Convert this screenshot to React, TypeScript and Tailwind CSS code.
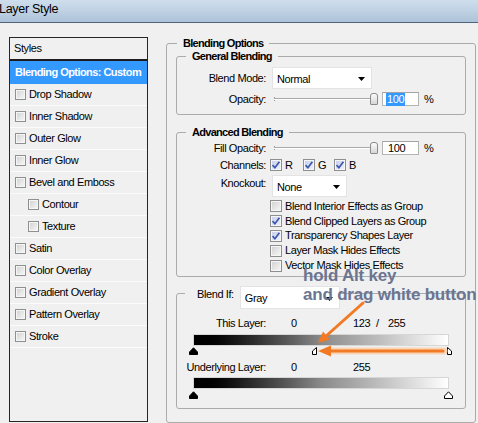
import React from "react";

type Mark = { v: number; kind: "black" | "white" | "halfL" | "halfR" };

function Check({ checked = false, size = 12 }: { checked?: boolean; size?: 11 | 12 }) {
  const dim = size === 11 ? "h-[11px] w-[11px]" : "h-[12px] w-[12px]";
  const fill = checked
    ? "bg-linear-to-br from-[#c3cbea] to-[#f3f5fc]"
    : "bg-linear-to-br from-[#d0d0d0] to-[#f9f9f9]";
  return (
    <span
      className={`relative inline-flex shrink-0 items-center justify-center border border-[#8e8f8f] shadow-[inset_0_0_0_1px_#f6f6f6] ${dim} ${fill}`}
    >
      {checked && (
        <svg width="10" height="10" viewBox="0 0 10 10">
          <path d="M1.6 5.1 L3.9 7.7 L8.4 1.8" fill="none" stroke="#3a56ab" strokeWidth="1.7" />
        </svg>
      )}
    </span>
  );
}

function Select({ label, w }: { label: string; w: string }) {
  return (
    <div className={`flex h-full items-center justify-between border border-[#e3e3e3] bg-white pl-[4px] pr-[6px] pt-[2px] ${w}`}>
      <span>{label}</span>
      <svg width="7" height="4" viewBox="0 0 7 4">
        <path d="M0 0 H7 L3.5 4 Z" fill="#000" />
      </svg>
    </div>
  );
}

function Slider() {
  return (
    <div className="relative ml-[1px] h-[12px] w-[106px]">
      <div className="absolute left-[2px] top-[4px] h-[4px] w-px bg-[#9a9a9a]" />
      <div className="absolute left-[2px] right-[6px] top-[5px] h-[2px] border-t border-b border-t-[#a9a9a9] border-b-white" />
      <div className="absolute right-0 top-0 h-[12px] w-[8px] rounded-t-[3px] rounded-b-[1px] border border-[#8b8b8b] bg-linear-to-b from-[#fbfbfb] to-[#d6d6d6]" />
    </div>
  );
}

function NumberField({ value, selected = false }: { value: string; selected?: boolean }) {
  return (
    <div className="ml-[4px] flex h-[14px] w-[37px] items-center border border-[#b4b4b4] border-t-[#a3a3a3] bg-white pl-[3px]">
      <span className={selected ? "bg-[#3399ff] px-[1px] text-white" : "pl-[2px]"}>{value}</span>
    </div>
  );
}

function GroupBox({ title, className, children }: { title: string; className: string; children: React.ReactNode }) {
  return (
    <div className={`relative rounded-[3px] border border-[#ababab] ${className}`}>
      <div className="absolute left-[9px] top-[-7px] bg-[#f0f0f0] px-[6px] font-bold tracking-[-0.7px]">{title}</div>
      {children}
    </div>
  );
}

function Row({ label, className, children, labelClass = "" }: { label: string; className: string; children?: React.ReactNode; labelClass?: string }) {
  return (
    <div className={`flex ${className}`}>
      <span className={`w-[89px] shrink-0 text-right ${labelClass}`}>{label}</span>
      <div className="ml-[5px] flex h-full items-center">{children}</div>
    </div>
  );
}

function Marker({ kind }: { kind: Mark["kind"] }) {
  if (kind === "halfL")
    return (
      <svg width="6" height="8" viewBox="0 0 6 8">
        <path d="M4.5 0.5 L0.5 4 L0.5 7.5 L4.5 7.5 Z" fill="#fff" stroke="#000" />
      </svg>
    );
  if (kind === "halfR")
    return (
      <svg width="6" height="8" viewBox="0 0 6 8">
        <path d="M0.5 0.5 L4.5 4 L4.5 7.5 L0.5 7.5 Z" fill="#fff" stroke="#000" />
      </svg>
    );
  return (
    <svg width="9" height="8" viewBox="0 0 9 8">
      <path
        d="M0.5 7.5 L0.5 5 L4.5 0.8 L8.5 5 L8.5 7.5 Z"
        fill={kind === "black" ? "#000" : "#fff"}
        stroke="#000"
      />
    </svg>
  );
}

function RangeBar({ marks, markTop }: { marks: Mark[]; markTop: string }) {
  return (
    <>
      <div className="ml-[16px] h-[12px] w-[256px] border border-[#d6d6d6] bg-linear-to-r from-black via-[#8a8a8a] to-white" />
      <div className={`relative ml-[12px] h-[8px] w-[266px] ${markTop}`}>
        {marks.map((m, i) => {
          const left = m.kind === "halfR" ? m.v + 3 : m.v;
          return (
            <div key={i} className="absolute top-0 flex" style={{ left }}>
              <Marker kind={m.kind} />
            </div>
          );
        })}
      </div>
    </>
  );
}

const effects: { name: string; sub?: boolean }[] = [
  { name: "Drop Shadow" },
  { name: "Inner Shadow" },
  { name: "Outer Glow" },
  { name: "Inner Glow" },
  { name: "Bevel and Emboss" },
  { name: "Contour", sub: true },
  { name: "Texture", sub: true },
  { name: "Satin" },
  { name: "Color Overlay" },
  { name: "Gradient Overlay" },
  { name: "Pattern Overlay" },
  { name: "Stroke" },
];

const advancedChecks: { label: string; on: boolean }[] = [
  { label: "Blend Interior Effects as Group", on: false },
  { label: "Blend Clipped Layers as Group", on: true },
  { label: "Transparency Shapes Layer", on: true },
  { label: "Layer Mask Hides Effects", on: false },
  { label: "Vector Mask Hides Effects", on: false },
];

function StylesList() {
  return (
    <div className="ml-[9px] mt-[14px] h-[385px] w-[139px] border border-[#262626]">
      <div className="flex h-[23px] items-center border-b-2 border-[#1c1c1c] pl-[4px]">Styles</div>
      <div className="flex h-[23px] items-center bg-[#3399ff] pl-[5px] font-bold tracking-[-0.55px] text-white">
        Blending Options: Custom
      </div>
      {effects.map((e) => (
        <div
          key={e.name}
          className={`flex h-[22px] items-center gap-[3px] border-b border-[#fbfbfb] ${e.sub ? "pl-[18px]" : "pl-[5px]"}`}
        >
          <Check size={11} />
          <span>{e.name}</span>
        </div>
      ))}
    </div>
  );
}

function BlendingOptions() {
  return (
    <div className="relative ml-[18px] mt-[20px] h-[380px] w-[310px] rounded-[3px] border border-[#ababab] px-[9px] pt-[12px]">
      <div className="absolute left-[10px] top-[-7px] bg-[#f0f0f0] px-[6px] font-bold tracking-[-0.7px]">Blending Options</div>

      <GroupBox title="General Blending" className="h-[59px] pt-[10px]">
        <Row label="Blend Mode:" className="h-[22px] items-center">
          <div className="ml-[1px] h-[22px]">
            <Select label="Normal" w="w-[100px]" />
          </div>
        </Row>
        <Row label="Opacity:" className="mt-[3px] h-[14px] items-center">
          <Slider />
          <NumberField value="100" selected />
          <span className="ml-[5px]">%</span>
        </Row>
      </GroupBox>

      <GroupBox title="Advanced Blending" className="mt-[17px] h-[145px] pt-[8px]">
        <Row label="Fill Opacity:" className="h-[14px] items-center">
          <Slider />
          <NumberField value="100" />
          <span className="ml-[5px]">%</span>
        </Row>
        <Row label="Channels:" className="mt-[4px] h-[12px] items-center">
          <div className="-ml-[1px] flex items-center">
            <span className="flex w-[33px] items-center gap-[3px]">
              <Check checked />R
            </span>
            <span className="flex w-[31px] items-center gap-[3px]">
              <Check checked />G
            </span>
            <span className="flex items-center gap-[3px]">
              <Check checked />B
            </span>
          </div>
        </Row>
        <Row label="Knockout:" className="mt-[4px] h-[22px] items-start" labelClass="pt-[2px]">
          <div className="ml-[1px] h-[22px]">
            <Select label="None" w="w-[75px]" />
          </div>
        </Row>
        <div className="mt-[2px] pl-[93px]">
          {advancedChecks.map((c) => (
            <div key={c.label} className="flex h-[14.8px] items-center gap-[3px]">
              <Check checked={c.on} />
              <span>{c.label}</span>
            </div>
          ))}
        </div>
      </GroupBox>

      <div className="relative mt-[16px] h-[116px] rounded-[3px] border border-[#ababab] pt-[23px]">
        <div className="absolute left-[8px] top-[-8px] flex items-start bg-[#f0f0f0] pl-[12px]">
          <span className="pt-[2px]">Blend If:</span>
          <div className="ml-[6px] h-[23px]">
            <Select label="Gray" w="w-[100px]" />
          </div>
        </div>
        <Row label="This Layer:" className="h-[13px] items-center">
          <span className="ml-[20px] w-[62px]">0</span>
          <span className="w-[23px]">123</span>
          <span className="w-[12px]">/</span>
          <span>255</span>
        </Row>
        <div className="mt-[4px]">
          <RangeBar
            markTop="mt-[1px]"
            marks={[
              { v: 0, kind: "black" },
              { v: 123, kind: "halfL" },
              { v: 255, kind: "halfR" },
            ]}
          />
        </div>
        <Row label="Underlying Layer:" className="mt-[6px] h-[13px] items-center">
          <span className="ml-[20px] w-[62px]">0</span>
          <span>255</span>
        </Row>
        <div className="mt-[3px]">
          <RangeBar
            markTop="mt-[2px]"
            marks={[
              { v: 0, kind: "black" },
              { v: 255, kind: "white" },
            ]}
          />
        </div>
      </div>
    </div>
  );
}

function Annotations() {
  return (
    <>
      <div className="pointer-events-none absolute left-[303px] top-[266px] whitespace-nowrap text-[17px] font-bold leading-[19px] tracking-[-0.2px] text-[#6b7590]">
        hold Alt key
        <br />
        and drag white button
      </div>
      <svg className="pointer-events-none absolute left-0 top-0" width="478" height="423" viewBox="0 0 478 423">
        <line x1="363" y1="303" x2="325" y2="337" stroke="#f27a24" strokeWidth="3" strokeLinecap="round" />
        <polygon points="318,343 329.8,339.4 323,331.6" fill="#f27a24" />
        <line x1="444" y1="351" x2="328" y2="351" stroke="#f9d4b6" strokeWidth="7" strokeLinecap="round" />
        <line x1="443" y1="351" x2="328" y2="351" stroke="#f27a24" strokeWidth="3" strokeLinecap="round" />
        <polygon points="318,351 331,345.5 331,356.5" fill="#f27a24" />
      </svg>
    </>
  );
}

export default function App() {
  return (
    <div className="relative h-[423px] w-[478px] overflow-hidden bg-[#f0f0f0] font-['Liberation_Sans',Arial,sans-serif] text-[11px] leading-[13px] tracking-[-0.4px] text-black">
      <div className="h-[23px] border-b border-[#52647c] bg-linear-to-b from-[#cfdeec] via-[#bfd1e3] to-[#adc3d9] pt-[1px] text-[12.5px] leading-[17px] tracking-[-0.3px]">
        <span className="-ml-[1px]">Layer Style</span>
      </div>
      <div className="flex items-start">
        <StylesList />
        <BlendingOptions />
      </div>
      <Annotations />
    </div>
  );
}
